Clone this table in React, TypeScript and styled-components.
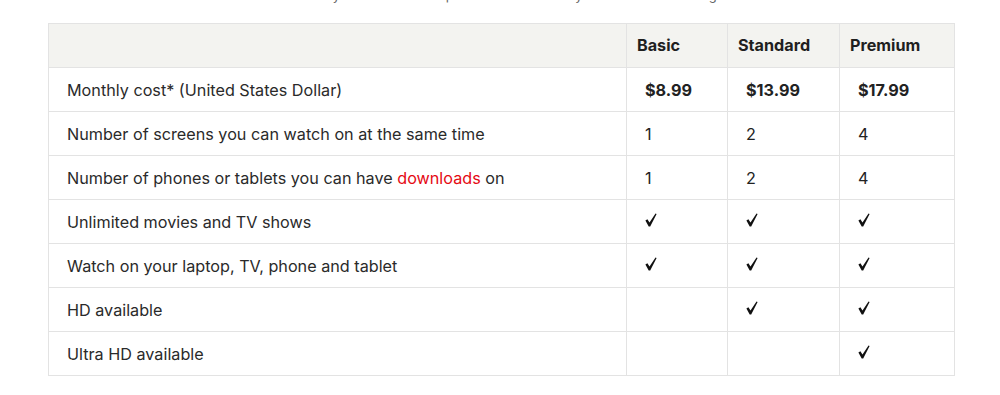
import React from "react";
import styled, { createGlobalStyle } from "styled-components";

const Global = createGlobalStyle`
  html, body { margin: 0; padding: 0; background: #fff; }
  body { font-family: Inter, "Noto Sans", "Liberation Sans", sans-serif; color: #222; }
`;

const Page = styled.div`
  padding: 0 46px 0 48px;
  overflow: hidden;
  height: 395px;
`;

const Intro = styled.p`
  margin: -14px 0 0;
  height: 37px;
  text-align: center;
  font-size: 13px;
  line-height: 18px;
  color: #666;
`;

const Table = styled.table`
  width: 906px;
  border-collapse: collapse;
  table-layout: fixed;
  font-size: 16.2px;
  border: 1px solid #e3e3e3;
`;

const HeadRow = styled.tr`
  background: #f3f3f0;
  height: 44px;
`;

const HeadCell = styled.th`
  text-align: left;
  font-weight: 700;
  padding: 0 10px 2px;
  border: 1px solid #e3e3e3;
  color: #1f1f1f;
  vertical-align: middle;
`;

const Row = styled.tr`
  height: 44px;
`;

const Label = styled.td`
  padding: 0 18px;
  border: 1px solid #e3e3e3;
  color: #2a2a2a;
  white-space: nowrap;
`;

const Cell = styled.td<{ $bold?: boolean }>`
  padding: 0 18px;
  border: 1px solid #e3e3e3;
  font-weight: ${(p) => (p.$bold ? 700 : 400)};
  color: #222;
`;

const Red = styled.span`
  color: #e50914;
`;

const CheckIcon = styled.svg`
  display: block;
  width: 12px;
  height: 14px;
  margin-top: -3px;
`;

const C = () => (
  <CheckIcon viewBox="0 0 12 14" aria-label="included">
    <path d="M0.4 7.6 L2.4 6.3 L4.5 9.4 L10.5 0.4 L11.6 1.1 L5.2 13.6 L3.7 13.6 Z" fill="#111" />
  </CheckIcon>
);

type R = { label: React.ReactNode; vals: React.ReactNode[]; bold?: boolean };

const rows: R[] = [
  { label: "Monthly cost* (United States Dollar)", vals: ["$8.99", "$13.99", "$17.99"], bold: true },
  { label: "Number of screens you can watch on at the same time", vals: ["1", "2", "4"] },
  {
    label: (
      <>
        Number of phones or tablets you can have <Red>downloads</Red> on
      </>
    ),
    vals: ["1", "2", "4"],
  },
  { label: "Unlimited movies and TV shows", vals: [<C />, <C />, <C />] },
  { label: "Watch on your laptop, TV, phone and tablet", vals: [<C />, <C />, <C />] },
  { label: "HD available", vals: [null, <C />, <C />] },
  { label: "Ultra HD available", vals: [null, null, <C />] },
];

export default function App() {
  return (
    <>
      <Global />
      <Page>
        <Intro>Availability of HD and 4K depends on the screen you own and its settings.</Intro>
        <Table>
          <colgroup>
            <col style={{ width: 578 }} />
            <col style={{ width: 101 }} />
            <col style={{ width: 112 }} />
            <col style={{ width: 115 }} />
          </colgroup>
          <thead>
            <HeadRow>
              <HeadCell />
              <HeadCell>Basic</HeadCell>
              <HeadCell>Standard</HeadCell>
              <HeadCell>Premium</HeadCell>
            </HeadRow>
          </thead>
          <tbody>
            {rows.map((r, i) => (
              <Row key={i}>
                <Label>{r.label}</Label>
                {r.vals.map((v, j) => (
                  <Cell key={j} $bold={r.bold}>
                    {v}
                  </Cell>
                ))}
              </Row>
            ))}
          </tbody>
        </Table>
      </Page>
    </>
  );
}
